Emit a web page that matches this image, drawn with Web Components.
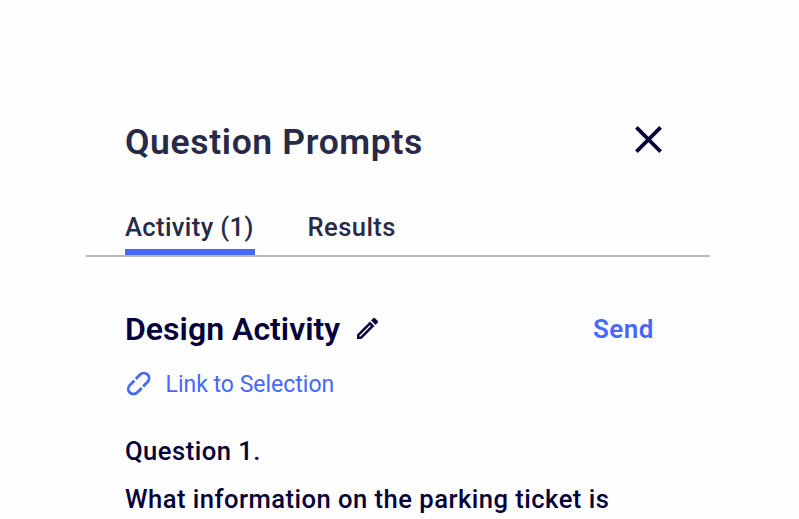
<!DOCTYPE html>
<html lang="en"><head><meta charset="utf-8"><title>Question Prompts</title>
<style>
html,body{margin:0;height:100%;overflow:hidden;background:#fefefe}
body{font-family:Roboto,"Open Sans",sans-serif;color:#04003a}
</style></head><body>
<prompt-panel>
  <panel-header slot="header">Question Prompts</panel-header>
  <tab-bar slot="tabs">
    <tab-item selected>Activity (1)</tab-item>
    <tab-item>Results</tab-item>
  </tab-bar>
  <activity-heading action="Send">Design Activity</activity-heading>
  <selection-link>Link to Selection</selection-link>
  <question-block label="Question 1.">What information on the parking ticket is</question-block>
</prompt-panel>
<script>
const define = (name, html) => customElements.define(name, class extends HTMLElement {
  connectedCallback() {
    if (this.shadowRoot) return;
    const root = this.attachShadow({ mode: 'open' });
    root.innerHTML = html;
    root.querySelectorAll('[data-attr]').forEach(n => n.textContent = this.getAttribute(n.dataset.attr));
  }
});

define('prompt-panel', `<style>
:host{display:block;box-sizing:border-box;width:624px;height:441px;margin:78px 0 0 86px;background:#fefefe;border-radius:4px 4px 0 0;white-space:nowrap}
.body{padding:50px 56px 0 39px}
</style><slot name="header"></slot><slot name="tabs"></slot><div class="body"><slot></slot></div>`);

define('panel-header', `<style>
:host{display:flex;justify-content:space-between;align-items:flex-start;height:125px;box-sizing:border-box;padding:43px 47px 0 39px;color:#272a48}
h1{margin:0;font-size:35.5px;line-height:42px;font-weight:600;letter-spacing:.64px}
svg{display:block;margin-top:5px}
</style><h1><slot></slot></h1>
<svg width="28" height="28" viewBox="0 0 28 28" fill="none" stroke="#04003a" stroke-width="3.7"><path d="M1.4 1.4 25.6 25.6M25.6 1.4 1.4 25.6"/></svg>`);

define('tab-bar', `<style>
:host{display:flex;gap:52.5px;height:54px;box-sizing:border-box;padding-left:39px;border-bottom:2px solid #b9b9bb;color:#272a48}
</style><slot></slot>`);

define('tab-item', `<style>
:host{display:block;box-sizing:border-box;height:52px;padding-top:9px;font-size:25.6px;line-height:30px;font-weight:500;letter-spacing:.42px}
:host([selected]){width:130px;border-bottom:6px solid #4768fd;letter-spacing:.36px}
</style><slot></slot>`);

define('activity-heading', `<style>
:host{display:flex;align-items:center;height:44px}
h2{margin:0;font-size:32px;line-height:44px;font-weight:600;letter-spacing:.02px}
svg{display:block;margin:-1px 0 0 17px}
button{all:unset;margin-left:auto;color:#4768fd;font-size:26px;line-height:44px;font-weight:600;letter-spacing:.5px}
</style><h2><slot></slot></h2>
<svg width="21" height="21" viewBox="3 3 18 18"><path fill="#04003a" stroke="#04003a" stroke-width=".25" d="M14.06 9.02l.92.92L5.92 19H5v-.92l9.06-9.06M17.66 3c-.25 0-.51.1-.7.29l-1.83 1.83 3.75 3.75 1.83-1.83a.996.996 0 0 0 0-1.41l-2.34-2.34c-.2-.2-.45-.29-.71-.29zm-3.6 3.19L3 17.25V21h3.75L17.81 9.94l-3.75-3.75z"/></svg>
<button data-attr="action"></button>`);

define('selection-link', `<style>
:host{display:flex;align-items:center;height:32px;margin-top:18px;gap:13.5px;color:#4768fd;font-size:23px;line-height:32px}
svg{display:block;margin:-2px 0 0 1px}
</style><svg width="26" height="26" viewBox="0 0 26 26" fill="none" stroke="#4768fd" stroke-width="2.8"><path d="M9.8 7.9 14.1 3.6a5.2 5.2 0 0 1 7.4 7.4l-4.4 4.4M8.4 9.6 3.8 14.2a5.2 5.2 0 0 0 7.4 7.4l4.6-4.6"/></svg><span><slot></slot></span>`);

define('question-block', `<style>
:host{display:block;margin-top:26px;font-size:25.6px;line-height:48px;font-weight:500}
p{margin:0}.q{letter-spacing:.48px}.a{letter-spacing:.47px}
</style><p class="q" data-attr="label"></p><p class="a"><slot></slot></p>`);
</script></body></html>
